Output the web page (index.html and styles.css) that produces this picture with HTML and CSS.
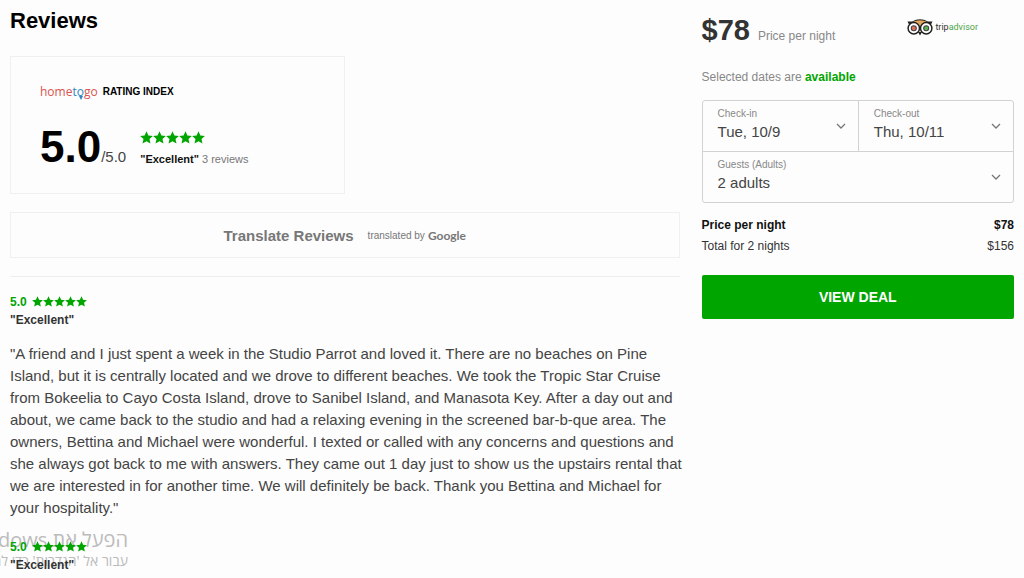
FILE: index.html
```
<!DOCTYPE html>
<html lang="en">
<head>
    <meta charset="UTF-8">
    <meta name="viewport" content="width=device-width, initial-scale=1.0">
    <title>Reviews</title>
    <link rel="stylesheet" href="styles.css">
</head>
<body>
    <svg class="sprite" aria-hidden="true">
        <symbol id="stars" viewBox="0 0 100 20">
            <path id="star" d="M10 0.5 L12.9 7 L19.8 7.7 L14.6 12.4 L16.1 19.3 L10 15.7 L3.9 19.3 L5.4 12.4 L0.2 7.7 L7.1 7 Z"/>
            <use href="#star" x="20"/>
            <use href="#star" x="40"/>
            <use href="#star" x="60"/>
            <use href="#star" x="80"/>
        </symbol>
        <symbol id="chevron" viewBox="0 0 10 6">
            <path d="M1 1 L5 5 L9 1" fill="none" stroke="#777" stroke-width="1.3"/>
        </symbol>
    </svg>

    <div class="page">
        <main class="reviews">
            <h1>Reviews</h1>

            <section class="rating-card">
                <div class="rating-brand">
                    <span class="hometogo">home<span class="blue">t<span class="pin">o</span></span>go</span>
                    <span class="rating-title">RATING INDEX</span>
                </div>
                <div class="rating-body">
                    <div class="score"><span class="score-value">5.0</span><span class="score-max">/5.0</span></div>
                    <div class="rating-info">
                        <svg class="stars stars-large" role="img" aria-label="5 stars"><use href="#stars"/></svg>
                        <p><strong>"Excellent"</strong> 3 reviews</p>
                    </div>
                </div>
            </section>

            <button type="button" class="translate">
                <span class="translate-label">Translate Reviews</span>
                <span class="translate-by">translated by</span>
                <span class="google">Google</span>
            </button>

            <article class="review">
                <div class="review-score">5.0 <svg class="stars" role="img" aria-label="5 stars"><use href="#stars"/></svg></div>
                <h2>"Excellent"</h2>
                <p>"A friend and I just spent a week in the Studio Parrot and loved it. There are no beaches on Pine Island, but it is centrally located and we drove to different beaches. We took the Tropic Star Cruise from Bokeelia to Cayo Costa Island, drove to Sanibel Island, and Manasota Key. After a day out and about, we came back to the studio and had a relaxing evening in the screened bar-b-que area. The owners, Bettina and Michael were wonderful. I texted or called with any concerns and questions and she always got back to me with answers. They came out 1 day just to show us the upstairs rental that we are interested in for another time. We will definitely be back. Thank you Bettina and Michael for your hospitality."</p>
            </article>

            <article class="review">
                <div class="review-score">5.0 <svg class="stars" role="img" aria-label="5 stars"><use href="#stars"/></svg></div>
                <h2>"Excellent"</h2>
            </article>
        </main>

        <aside class="booking">
            <div class="price-row">
                <span class="price">$78</span>
                <span class="price-note">Price per night</span>
                <div class="tripadvisor">
                    <svg class="owl" viewBox="0 0 26 17" aria-hidden="true">
                        <path d="M0.5 2.5 H5 Q13 -2 21 2.5 H25.5 L24 5.5 H2 Z" fill="#222"/>
                        <path d="M5.5 2.9 Q13 -0.4 20.5 2.9 Q14.5 4 13 9 Q11.5 4 5.5 2.9 Z" fill="#e3a85c"/>
                        <circle cx="6.8" cy="9.3" r="5.7" fill="#fff" stroke="#222" stroke-width="1.5"/>
                        <circle cx="19.2" cy="9.3" r="5.7" fill="#fff" stroke="#222" stroke-width="1.5"/>
                        <circle cx="6.8" cy="9.3" r="2.5" fill="#e0705a" stroke="#444" stroke-width="1.1"/>
                        <circle cx="19.2" cy="9.3" r="2.5" fill="#5ab552" stroke="#444" stroke-width="1.1"/>
                        <path d="M11 13 L15 13 L13 16.5 Z" fill="#222"/>
                    </svg>
                    <span>trip<span class="advisor">advisor</span></span>
                </div>
            </div>

            <p class="availability">Selected dates are <strong>available</strong></p>

            <div class="fields">
                <button type="button" class="field">
                    <span class="field-text"><span class="field-label">Check-in</span><span class="field-value">Tue, 10/9</span></span>
                    <svg class="chevron"><use href="#chevron"/></svg>
                </button>
                <button type="button" class="field">
                    <span class="field-text"><span class="field-label">Check-out</span><span class="field-value">Thu, 10/11</span></span>
                    <svg class="chevron"><use href="#chevron"/></svg>
                </button>
                <div class="field field-wide">
                    <div class="field-text">
                        <label class="field-label" for="guests">Guests (Adults)</label>
                        <select id="guests" class="field-value">
                            <option>1 adult</option>
                            <option selected>2 adults</option>
                            <option>3 adults</option>
                        </select>
                    </div>
                    <svg class="chevron"><use href="#chevron"/></svg>
                </div>
            </div>

            <dl class="totals">
                <div class="total-night"><dt>Price per night</dt><dd>$78</dd></div>
                <div><dt>Total for 2 nights</dt><dd>$156</dd></div>
            </dl>

            <button type="button" class="deal">VIEW DEAL</button>
        </aside>
    </div>

    <div class="activation" dir="rtl" lang="he">
        <div class="activation-title">הפעל את Windows</div>
        <div class="activation-text">עבור אל 'הגדרות' כדי להפעיל את Windows.</div>
    </div>
</body>
</html>
```
FILE: styles.css
```
* {
    box-sizing: border-box;
}
body {
    margin: 0;
    min-height: 100vh;
    position: relative;
    overflow-x: hidden;
    background-color: #fdfdfd;
    color: #444;
    font-family: "Liberation Sans", Arial, sans-serif;
    font-size: 12px;
    line-height: 16px;
}
h1, h2, p, dl, dd {
    margin: 0;
}
button, select {
    font-family: inherit;
    color: inherit;
    cursor: pointer;
}
.sprite {
    display: none;
}
.page {
    display: grid;
    grid-template-columns: 15fr 7fr;
    gap: 22px;
    padding: 8px 10px 0;
}

/* reviews column */
h1 {
    color: #000;
    font-size: 22px;
    line-height: 26px;
}
.rating-card {
    width: 50%;
    margin-top: 22px;
    padding: 26px 29px 11px;
    border: 1px solid #f0f0f0;
}
.rating-brand {
    display: flex;
    align-items: center;
    gap: 5px;
    height: 18px;
}
.hometogo {
    color: #d9534f;
    font-family: "Open Sans", sans-serif;
    font-size: 12px;
}
.blue {
    color: #2f86c0;
}
.pin {
    position: relative;
}
.pin::after {
    content: "";
    position: absolute;
    left: 2px;
    bottom: 0;
    border: 2px solid transparent;
    border-top: 4px solid #2f86c0;
    border-bottom: 0;
}
.rating-title {
    color: #000;
    font-size: 10px;
    font-weight: bold;
}
.rating-body {
    display: flex;
    gap: 14px;
    margin-top: 22px;
}
.score {
    line-height: 48px;
    white-space: nowrap;
}
.score-value {
    color: #000;
    font-size: 44px;
    font-weight: bold;
}
.score-max {
    font-size: 15px;
}
.rating-info {
    padding-top: 8px;
    font-size: 11px;
    color: #777;
}
.rating-info strong {
    color: #111;
}
.stars {
    width: 55px;
    height: 11px;
    margin-left: 2px;
    fill: #00a500;
    vertical-align: -1px;
}
.stars-large {
    display: block;
    width: 65px;
    height: 13px;
    margin: 0 0 7px;
}
.translate {
    display: flex;
    align-items: center;
    justify-content: center;
    width: 100%;
    height: 46px;
    margin: 18px 0;
    padding: 0;
    border: 1px solid #f0f0f0;
    background: none;
    color: #777;
}
.translate-label {
    font-size: 15px;
    font-weight: bold;
}
.translate-by {
    margin: 0 3px 0 14px;
    font-size: 10px;
}
.google {
    font-family: Lato, sans-serif;
    font-size: 12px;
    font-weight: bold;
}
.review {
    padding-top: 16px;
    margin-bottom: 3px;
}
.translate + .review {
    border-top: 1px solid #ededed;
}
.review-score {
    color: #00a500;
    font-weight: bold;
    line-height: 18px;
}
.review h2 {
    color: #333;
    font-size: 12px;
    line-height: 18px;
}
.review p {
    margin: 14px -8px 0 0;
    font-size: 15px;
    line-height: 22px;
}

/* booking column */
.price-row {
    display: flex;
    align-items: baseline;
    height: 44px;
    line-height: 44px;
}
.price {
    color: #333;
    font-size: 29px;
    font-weight: bold;
}
.price-note {
    margin-left: 8px;
    color: #888;
}
.tripadvisor {
    display: flex;
    align-items: center;
    gap: 2px;
    height: 38px;
    margin-left: auto;
    margin-right: 36px;
    align-self: flex-start;
    color: #333;
    font-family: Roboto, sans-serif;
    font-size: 9px;
}
.owl {
    width: 26px;
    height: 17px;
}
.advisor {
    color: #4fa548;
}
.availability {
    margin-top: 17px;
    color: #888;
}
.availability strong {
    color: #00a500;
}
.fields {
    display: grid;
    grid-template-columns: 1fr 1fr;
    margin-top: 15px;
    border: 1px solid #d2d2d2;
    border-radius: 3px;
}
.field {
    display: flex;
    align-items: center;
    justify-content: space-between;
    height: 50px;
    padding: 0 12px 0 15px;
    border: 0;
    background: none;
    text-align: left;
}
.field + .field {
    border-left: 1px solid #d2d2d2;
}
.field.field-wide {
    grid-column: span 2;
    height: 51px;
    border-left: 0;
    border-top: 1px solid #d2d2d2;
}
.field-text {
    flex: 1;
    padding-bottom: 4px;
}
.field-label, .field-value {
    display: block;
}
.field-label {
    color: #888;
    font-size: 10px;
    line-height: 16px;
}
.field-value {
    width: 100%;
    padding: 0;
    border: 0;
    background: none;
    appearance: none;
    color: #444;
    font-size: 15px;
    line-height: 20px;
}
.chevron {
    width: 10px;
    height: 6px;
}
.totals {
    margin-top: 12px;
    color: #333;
}
.totals div {
    display: flex;
    justify-content: space-between;
    line-height: 21px;
}
.totals .total-night {
    color: #111;
    font-weight: bold;
}
.deal {
    display: block;
    width: 100%;
    height: 44px;
    margin-top: 18px;
    border: 0;
    border-radius: 2px;
    background-color: #00a500;
    color: #fff;
    font-size: 14px;
    font-weight: bold;
}

/* activation notice, runs off the left edge */
.activation {
    position: absolute;
    z-index: -1;
    left: -200px;
    bottom: 8px;
    width: 328px;
    color: #bbb;
    font-family: "Open Sans", "Noto Sans", sans-serif;
    white-space: nowrap;
}
.activation-title {
    font-size: 20px;
    line-height: 24px;
}
.activation-text {
    font-size: 14px;
    line-height: 18px;
}
```
